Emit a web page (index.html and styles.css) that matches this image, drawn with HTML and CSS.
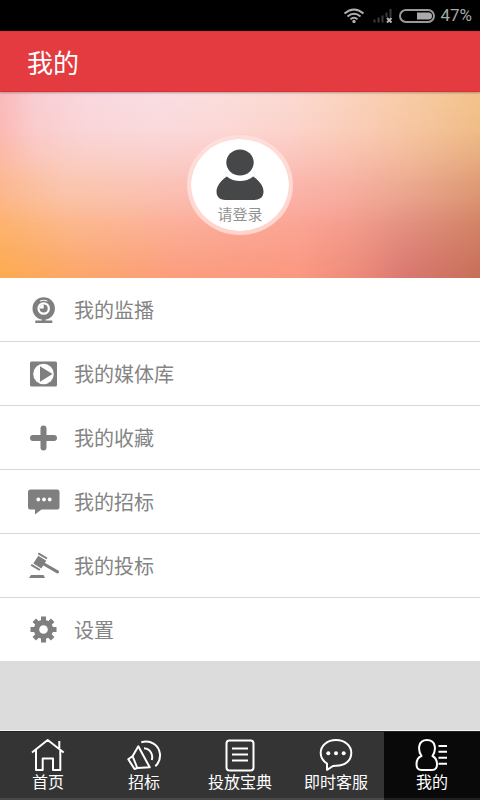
FILE: index.html
```html
<!DOCTYPE html>
<html lang="zh-CN">
<head>
<meta charset="utf-8">
<meta name="viewport" content="width=device-width, initial-scale=1">
<title>我的</title>
<link rel="stylesheet" href="styles.css">
</head>
<body>
<div class="status">
  <svg class="status-wifi" viewBox="0 0 22 16" aria-hidden="true">
    <path d="M1.500 5.500Q11-2.500 20.500 5.500M4.500 8.500Q11 3 17.500 8.500M7.500 11.300Q11 8.300 14.500 11.300"/>
    <circle cx="11" cy="13.500" r="1.700"/>
  </svg>
  <svg class="status-signal" viewBox="0 0 20 16" aria-hidden="true">
    <path class="bars" d="M1.500 14.500v-3M5.500 14.500v-5M9.500 14.500v-7M13.500 9V4.500M17.500 9V1"/>
    <path class="cross" d="M14 10l4.500 4.500M18.500 10L14 14.500"/>
  </svg>
  <svg class="status-battery" viewBox="0 0 36 14" aria-hidden="true">
    <rect class="shell" x="1" y="1" width="34" height="12" rx="6"/>
    <path class="level" d="M18 3.500h11.500a3.500 3.500 0 0 1 0 7H18z"/>
  </svg>
  <span>47%</span>
</div>
<header class="header"><h1>我的</h1></header>
<main class="main">
  <section class="hero">
    <button class="login" type="button">
      <svg viewBox="0 0 48 52" aria-hidden="true">
        <ellipse cx="24" cy="13.500" rx="13.700" ry="13"/>
        <path d="M10.800 27.500C5 31.500.500 37 .5 42.500c0 7 5 8.500 11 8.500h25c6 0 11-1.500 11-8.500 0-5.500-4.500-11-10.300-15C30 33.500 18 33.500 10.800 27.500z"/>
      </svg>
      <span>请登录</span>
    </button>
  </section>
  <ul class="menu">
    <li><a href="#monitor">
      <svg viewBox="0 0 36 36" aria-hidden="true">
        <circle cx="17.700" cy="16.500" r="11.200"/>
        <circle class="cut" cx="17.700" cy="16.500" r="6.300"/>
        <circle cx="17.700" cy="16.500" r="4"/>
        <path class="cut" d="M17.700 12.500a4 4 0 0 0-4 4h4z"/>
        <path class="cut-line" d="M14 9q3.700-1.500 7.400 0"/>
        <path d="M16 27h3.500v2H16zM9.300 28.500h17V31h-17z"/>
      </svg>我的监播</a></li>
    <li><a href="#media">
      <svg viewBox="0 0 36 36" aria-hidden="true">
        <rect x="4" y="5.500" width="27" height="25" rx="1.500"/>
        <circle class="cut" cx="17.500" cy="18" r="10.300"/>
        <path d="M14 10.300v15.400l12.500-7.700z"/>
      </svg>我的媒体库</a></li>
    <li><a href="#favorites">
      <svg viewBox="0 0 36 36" aria-hidden="true">
        <path class="plus" d="M17.500 8.500v19M7 18h21"/>
      </svg>我的收藏</a></li>
    <li><a href="#tenders">
      <svg viewBox="0 0 36 36" aria-hidden="true">
        <path d="M4.500 5.500h26.500a2.500 2.500 0 0 1 2.500 2.500v15a2.500 2.500 0 0 1-2.500 2.500H15.500L9 30.500v-5H4.500A2.500 2.500 0 0 1 2 23V8a2.500 2.500 0 0 1 2.500-2.500z"/>
        <g class="cut"><circle cx="12.300" cy="15.500" r="1.900"/><circle cx="18" cy="15.500" r="1.900"/><circle cx="23.700" cy="15.500" r="1.900"/></g>
      </svg>我的招标</a></li>
    <li><a href="#bids">
      <svg viewBox="0 0 36 36" aria-hidden="true">
        <path d="M12.300 7.800l8 4.900-5 7.800-8-4.900zM5 27h12.500l1.500 3H3z"/>
        <path class="bar" d="M12.300 5.300l8.700 5.200M5.200 16.800l8.700 5.200"/>
        <path class="handle" d="M17 15.500l14.500 8.400"/>
      </svg>我的投标</a></li>
    <li><a href="#settings">
      <svg viewBox="0 0 36 36" aria-hidden="true">
        <g class="teeth"><path d="M17.500 4.500v26M4.500 17.500h26"/><path d="M8.300 8.300l18.400 18.400M26.700 8.300L8.300 26.700"/></g>
        <circle cx="17.500" cy="17.500" r="9.700"/>
        <circle class="cut" cx="17.500" cy="17.500" r="4.300"/>
      </svg>设置</a></li>
  </ul>
</main>
<nav class="tabs">
  <a href="#home">
    <svg viewBox="0 0 36 34" aria-hidden="true"><path d="M2 14.500L17.700 2l16 12.500M29.300 3v7M6 12v20h6.700V20.500H23V32h7.300V12"/></svg>
    首页</a>
  <a href="#tender">
    <svg viewBox="0 0 36 34" aria-hidden="true"><path d="M2.300 21.300L6.700 18 12.300 8.300l11.400 21L11.300 30 8.500 31zM6.700 18.500l4.600 11.500M18 10.300c6 .5 9.500 6 7.800 11.700M15.300 4.300C24 1.300 33 7 34 16c.4 5-1.400 9.300-4.700 12.300"/></svg>
    招标</a>
  <a href="#guide">
    <svg viewBox="0 0 36 34" aria-hidden="true"><rect x="4.500" y="2.500" width="27" height="30" rx="3"/><path d="M10 10.500h16M10 16.500h16M10 22.500h16"/></svg>
    投放宝典</a>
  <a href="#service">
    <svg viewBox="0 0 36 34" aria-hidden="true"><path d="M9 25.500C5 23 2.700 19.500 2.700 15c0-7.500 6.500-13 15.300-13s15.300 5.500 15.300 13S27 27.800 18 27.800c-1 0-2 0-3 .2L9 31.800z"/><g class="dot"><circle cx="10.300" cy="15.300" r="2"/><circle cx="18" cy="15.300" r="2"/><circle cx="25.700" cy="15.300" r="2"/></g></svg>
    即时客服</a>
  <a class="active" href="#me" aria-current="page">
    <svg viewBox="0 0 36 34" aria-hidden="true"><path d="M7.500 18C3.500 12 4 2 13 2s9.500 10 5.500 16c3 1.500 4.500 4 4.500 8.500 0 4-1.500 5.500-5 5.500H7.500c-3.500 0-5-1.500-5-5.500 0-4.500 2-7.500 5-8.500zM24.500 8H33M24.500 13.700H33M24.500 19.700H33M24.500 25.700H33"/></svg>
    我的</a>
</nav>
</body>
</html>
```
FILE: styles.css
```css
* { box-sizing: border-box; }

body {
  margin: 0;
  min-height: 100vh;
  display: flex;
  flex-direction: column;
  background: #dcdcdc;
  font-family: "Noto Sans CJK SC", sans-serif;
}

a { color: inherit; text-decoration: none; }

.status {
  height: 31px;
  padding: 0 8px;
  display: flex;
  align-items: center;
  justify-content: flex-end;
  background: #000;
  color: #a8a8a8;
  font: 17px/31px Roboto, sans-serif;
}
.status-wifi { width: 22px; height: 16px; margin-right: 8px; fill: #b0b0b0; }
.status-wifi path { fill: none; stroke: #b0b0b0; stroke-width: 2; }
.status-signal { width: 20px; height: 16px; margin-right: 6px; fill: none; }
.status-signal .bars { stroke: #3c3c3c; stroke-width: 2; }
.status-signal .cross { stroke: #b8b8b8; stroke-width: 2; }
.status-battery { width: 36px; height: 14px; margin-right: 5px; }
.status-battery .shell { fill: none; stroke: #999; stroke-width: 2; }
.status-battery .level { fill: #aaa; }

.header {
  position: relative;
  z-index: 1;
  height: 61px;
  padding: 0 27px;
  display: flex;
  align-items: center;
  background: #e33b3f;
  border-top: 1px solid #ee2f30;
  border-bottom: 1px solid #dd3034;
  box-shadow: 0 1px 2px rgba(110, 90, 90, 0.5);
  color: #fff;
}
.header h1 { margin: 0; font-size: 26px; font-weight: 400; line-height: 40px; }

.main { flex: 1; }

/* Three horizontal colour bands, cross-faded vertically by masks. */
.hero {
  position: relative;
  height: 186px;
  display: flex;
  align-items: center;
  justify-content: center;
  background: linear-gradient(90deg, #fdab50, #fca66c 18%, #fc9d7e 38%, #fb9880 62%, #ee8b7a 74%, #d97771 85%, #c86f58);
}
.hero::before,
.hero::after {
  content: "";
  position: absolute;
  inset: 0;
}
.hero::before {
  background: linear-gradient(90deg, #fdb98c, #fbc5ac 14%, #fbc3b0 26%, #fbbcb2 40%, #fbb0a8 60%, #f8aca0 72%, #eba68e 85%, #db9473);
  mask-image: linear-gradient(#000 35%, rgba(0, 0, 0, 0.85) 55%, rgba(0, 0, 0, 0.2) 88%, transparent);
}
.hero::after {
  background: linear-gradient(90deg, #fbb9bb, #f9cdd3 7%, #f9d8df 18%, #f9dde3 32%, #fbdddd 45%, #fbdad2 60%, #fad0b4 78%, #f3c38a);
  mask-image: linear-gradient(#000, rgba(0, 0, 0, 0.85) 20%, rgba(0, 0, 0, 0.2) 50%, transparent 72%);
}

.login {
  z-index: 1;
  width: 106px;
  height: 100px;
  padding: 10px 0 0;
  display: flex;
  flex-direction: column;
  align-items: center;
  border: 4px solid rgba(255, 225, 220, 0.8);
  border-radius: 50%;
  background: #fff;
  background-clip: padding-box;
  color: #929292;
  font-family: inherit;
  font-size: 15px;
  line-height: 20px;
}
.login svg { width: 48px; height: 52px; margin-bottom: 3px; fill: #464749; }

.menu { margin: 0; padding: 0; list-style: none; background: #fff; }
.menu li + li { border-top: 1px solid #d6d6d6; }
.menu a {
  height: 63px;
  padding: 0 26px;
  display: flex;
  align-items: center;
  gap: 12px;
  color: #848484;
  font-size: 20px;
  line-height: 30px;
}
.menu svg { width: 36px; height: 36px; fill: #7f7f7f; }
.menu .cut { fill: #fff; }
.menu .cut-line { fill: none; stroke: #fff; stroke-width: 1; }
.menu .plus { stroke: #7f7f7f; stroke-width: 6; stroke-linecap: round; }
.menu .bar { stroke: #7f7f7f; stroke-width: 2; }
.menu .handle { stroke: #7f7f7f; stroke-width: 3; stroke-linecap: round; }
.menu .teeth { stroke: #7f7f7f; stroke-width: 5; }

.tabs {
  height: 70px;
  display: flex;
  border-top: 1px solid #f4f4f4;
  background: #343434;
}
.tabs a {
  flex: 1;
  padding-top: 6px;
  display: flex;
  flex-direction: column;
  align-items: center;
  border-top: 1px solid #222;
  border-bottom: 2px solid #484848;
  color: #fff;
  font-size: 16px;
  font-weight: 400;
  line-height: 18px;
}
.tabs .active { background: #090909; border-bottom-color: #202020; }
.tabs svg {
  width: 36px;
  height: 34px;
  fill: none;
  stroke: #fff;
  stroke-width: 2;
  stroke-linejoin: round;
}
.tabs .dot { fill: #fff; stroke: none; }
```
